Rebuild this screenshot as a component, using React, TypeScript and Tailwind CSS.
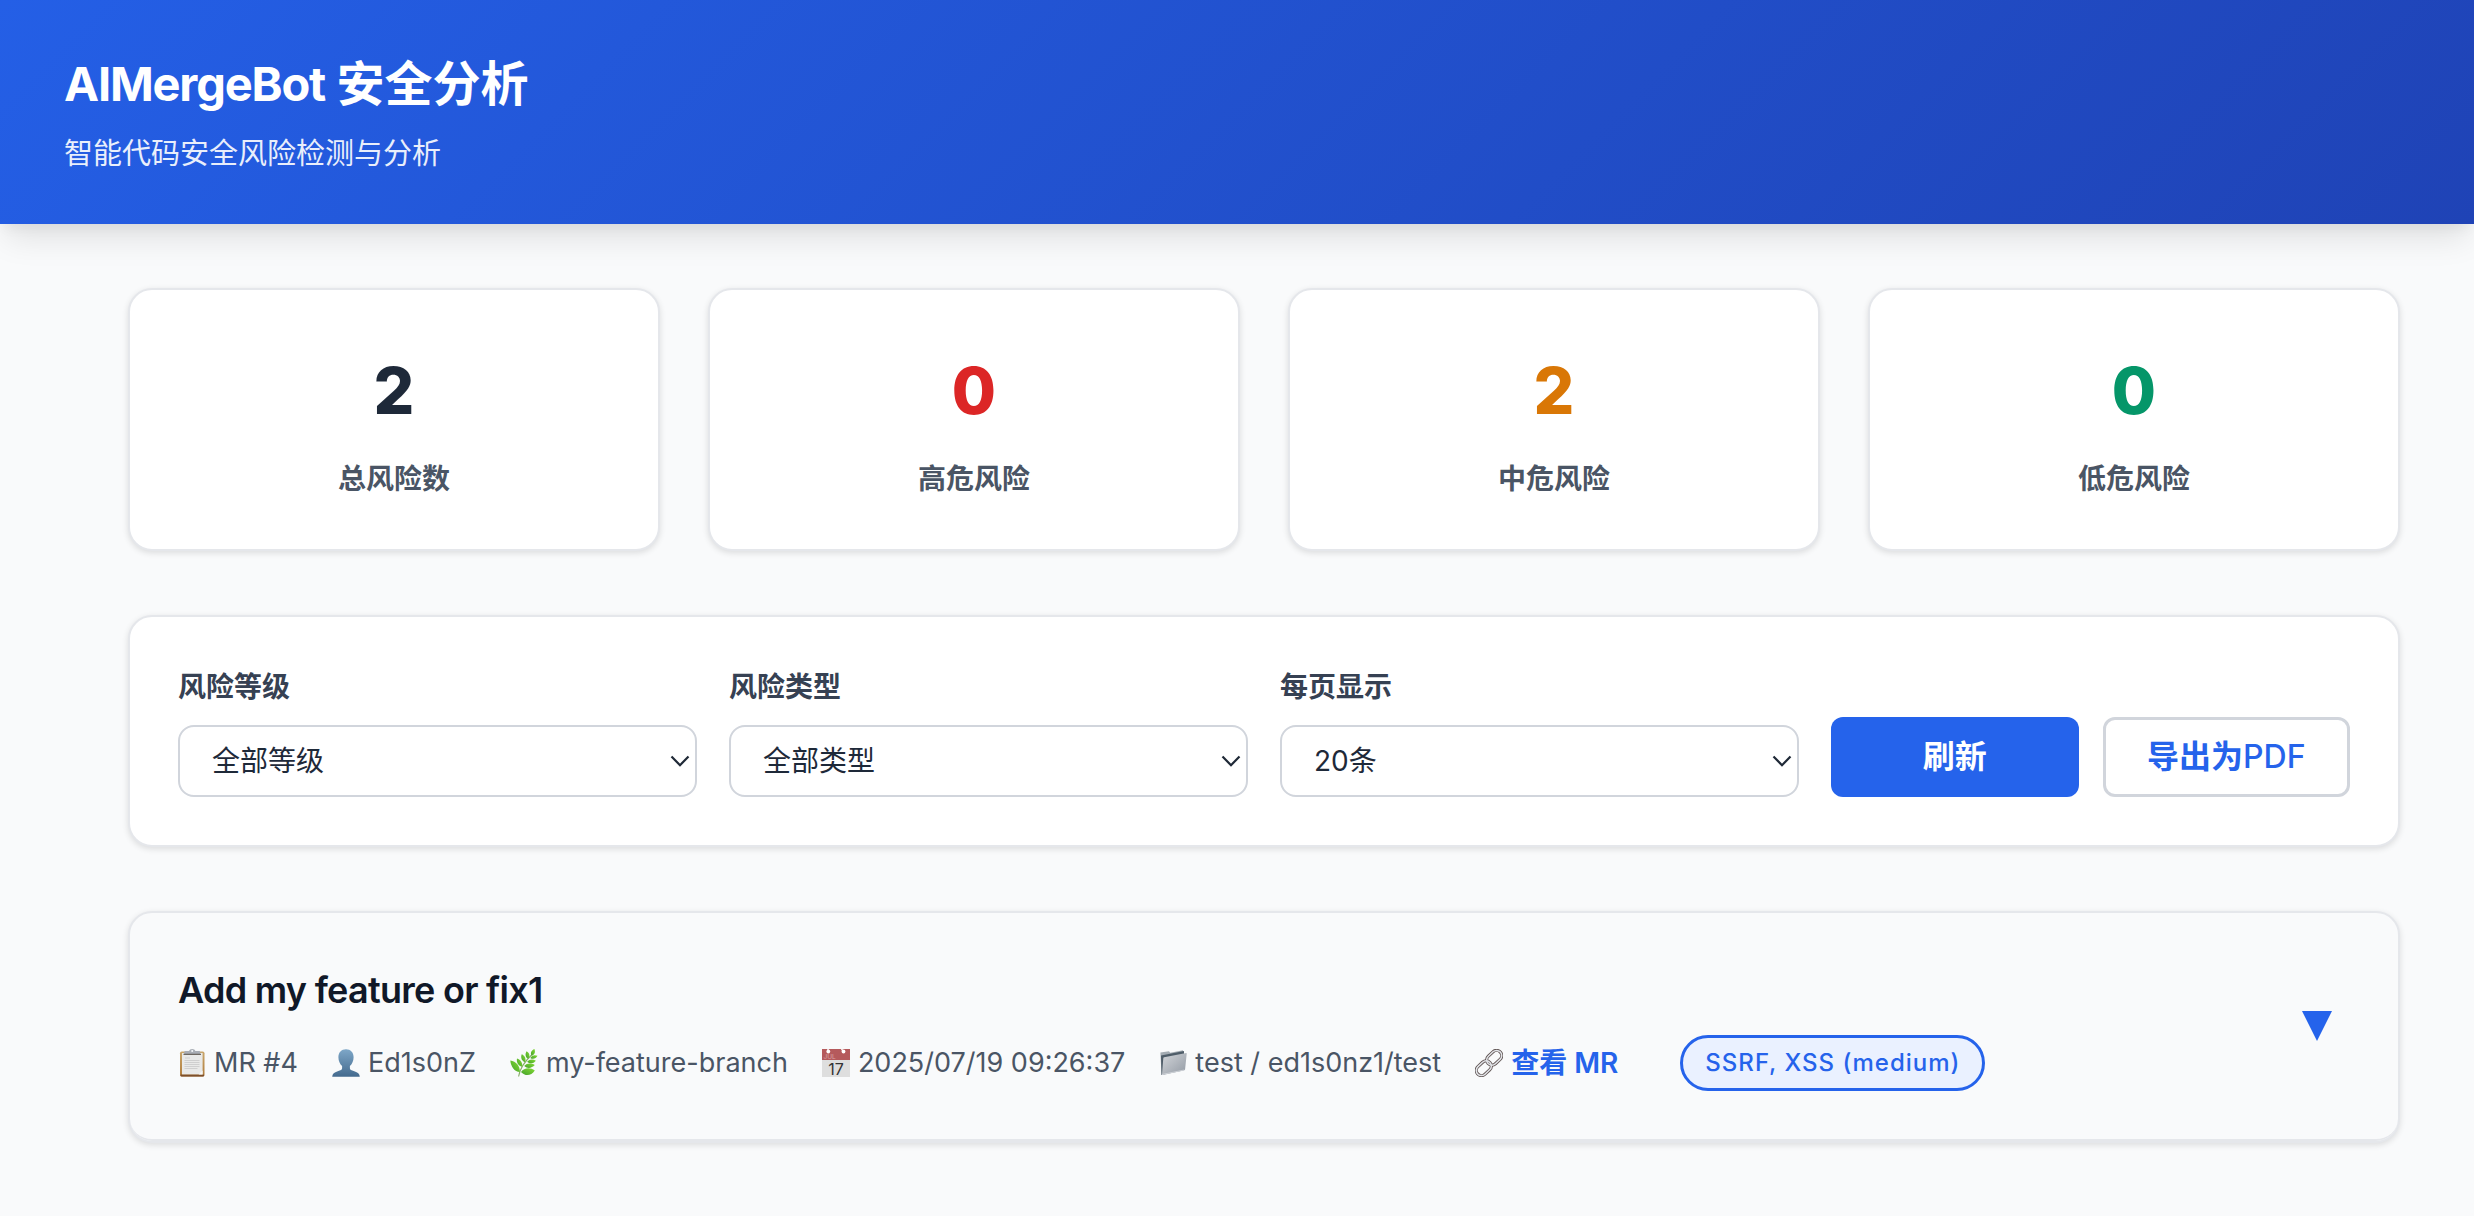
import type { ReactNode } from 'react';

const stats = [
  { value: 2, label: '总风险数', color: 'text-gray-800' },
  { value: 0, label: '高危风险', color: 'text-[#dc2626]' },
  { value: 2, label: '中危风险', color: 'text-[#d97706]' },
  { value: 0, label: '低危风险', color: 'text-[#059669]' },
];

const filters = [
  { id: 'level', label: '风险等级', options: ['全部等级', '高危', '中危', '低危'] },
  { id: 'type', label: '风险类型', options: ['全部类型', 'SSRF', 'XSS'] },
  { id: 'size', label: '每页显示', options: ['20条', '50条', '100条'] },
];

function ClipboardIcon() {
  return (
    <svg viewBox="0 0 28 28" className="size-7 shrink-0" aria-hidden="true">
      <defs>
        <linearGradient id="board" x1="0" y1="0" x2="0" y2="1">
          <stop offset="0" stopColor="#c9a66b" />
          <stop offset="1" stopColor="#b07c3c" />
        </linearGradient>
      </defs>
      <rect x="2" y="2.5" width="24.5" height="25" rx="1.8" fill="url(#board)" />
      <rect x="2.4" y="25.6" width="23.8" height="2" rx="1" fill="#7d4f2c" />
      <rect x="4" y="4" width="20.6" height="21.4" fill="#e9e9e8" />
      <path d="M4 25.4h20.6v-4l-4 4z" fill="#f7f7f6" />
      <path d="M7 9h5M6.5 11.5h15M6.5 13.5h15M6.5 15.5h15M6.5 17.5h15M6.5 19.5h13" stroke="#cfcfcf" strokeWidth="1.1" />
      <path d="M6.2 3.2q0-1.2 1.2-1.2h3.6q.6-2 3.2-2t3.2 2H21q1.2 0 1.2 1.2v2.5h-16z" fill="#a9adb5" />
      <path d="M5.5 5.4h17.5" stroke="#6e6862" strokeWidth="1.3" />
      <circle cx="14.2" cy="2" r="1" fill="#f3f6fa" />
    </svg>
  );
}

function PersonIcon() {
  return (
    <svg viewBox="0 0 28 28" className="size-7 shrink-0" aria-hidden="true">
      <defs>
        <linearGradient id="person" x1="0" y1="0" x2="0" y2="1">
          <stop offset="0" stopColor="#7ea7c8" />
          <stop offset="1" stopColor="#446a8e" />
        </linearGradient>
      </defs>
      <path
        d="M14 .2c4.600 0 7.600 3.100 7.600 8.100 0 3.700-1.600 7-3.700 8.700v2.300c0 1.500 1.400 2 4.400 2.900 3.500 1.100 5.300 2.500 5.500 5.600H.2c.2-3.100 2-4.500 5.500-5.600 3-.9 4.400-1.400 4.400-2.900V17C8 15.300 6.400 12 6.400 8.300 6.400 3.300 9.400.2 14 .2z"
        fill="url(#person)"
      />
    </svg>
  );
}

function HerbIcon() {
  return (
    <svg viewBox="0 0 28 28" className="size-7 shrink-0" aria-hidden="true">
      <defs>
        <linearGradient id="herb" x1="1" y1="0" x2="0" y2="1">
          <stop offset="0" stopColor="#84dc34" />
          <stop offset="1" stopColor="#45a02c" />
        </linearGradient>
      </defs>
      <path d="M8.600 27.500C9.500 21 14 13 22.500 5" fill="none" stroke="#86ad66" strokeWidth="1.100" />
      <g fill="url(#herb)">
        <path d="M21.800 6.800C19.800 4.200 21.500 1.300 24.400.1c1.200 2.600.6 5.600-2.600 6.700z" />
        <path d="M18.300 9.800c-3.200-1.500-3.300-5-1.700-7.600 2.900 1.500 3.700 4.900 1.700 7.600z" />
        <path d="M15 13.300c-3.500-1.300-4.500-5-3.300-8 3.300 1.400 4.700 4.900 3.300 8z" />
        <path d="M12 17.800c-4.200-.9-5.700-4.800-5-8.200 3.800 1.200 5.900 4.700 5 8.200z" />
        <path d="M9.800 23C4.500 22.800.8 17.500.3 11.400c5.800.7 9.900 5.600 9.500 11.600z" />
        <path d="M20.300 9c1.800-3 4.600-3.200 7.200-2.200-1.500 2.900-4.500 4-7.200 2.200z" />
        <path d="M17.200 12.700c2.300-2.700 5.800-2.700 8.700-1-2.300 2.800-5.800 3.500-8.700 1z" />
        <path d="M14.200 17.100c2.600-3 7-3.200 10.600-1-3 3.200-7.200 3.900-10.600 1z" />
        <path d="M11 22.900c3.200-4.500 9.300-4.800 13.800-1.500-3.500 5.500-9.600 6.100-13.800 1.500z" />
      </g>
    </svg>
  );
}

function CalendarIcon() {
  return (
    <svg viewBox="0 0 28 28" className="size-7 shrink-0" aria-hidden="true">
      <rect width="28" height="28" fill="#dedede" />
      <rect width="28" height="11" fill="#b55a5c" />
      <circle cx="6.300" cy="2.500" r="1.900" fill="#fff" />
      <circle cx="21.500" cy="2.500" r="1.900" fill="#fff" />
      <path d="M6 0v2.500M19.500 0l2 2.500" stroke="#fff" strokeWidth="1.300" />
      <text x="1.500" y="10" fontSize="6.500" fill="#dba6a7" className="font-['Inter']">JUL</text>
      <text x="14" y="25.500" fontSize="16" textAnchor="middle" fill="#333" className="font-['Inter']">17</text>
    </svg>
  );
}

function FolderIcon() {
  return (
    <svg viewBox="0 0 28 28" className="size-7 shrink-0" aria-hidden="true">
      <defs>
        <linearGradient id="folder" x1="0" y1="0" x2="1" y2="1">
          <stop offset="0" stopColor="#d3d6da" />
          <stop offset="1" stopColor="#9299a3" />
        </linearGradient>
      </defs>
      <path d="M1.400 3.500 10 2.200l1.200 1.500L24 1.300l.5 20.200L2.500 26z" fill="#a3abb2" />
      <path d="M2 6.500 25 2v18L2.500 26z" fill="#4f5d69" />
      <path d="M5.200 8.200 27.200 4q.6 0 .5.700l-1.600 15.600q-.1.800-.9 1L3.800 26q-.8.100-.8-.7l1.300-16q.1-.9.900-1.100z" fill="url(#folder)" />
      <path d="M3 25.500 25.300 21" stroke="#d8dbdf" strokeWidth=".8" />
    </svg>
  );
}

function LinkIcon() {
  return (
    <svg viewBox="0 0 28 28" className="size-7 shrink-0" aria-hidden="true" fill="none">
      <g stroke="#5f5352" strokeWidth="3.200">
        <rect x="-8.400" y="-5.200" width="16.800" height="10.400" rx="5.200" transform="translate(8.800 19.200) rotate(-43)" />
        <rect x="-8.400" y="-5.200" width="16.800" height="10.400" rx="5.200" transform="translate(19.200 8.800) rotate(-43)" />
      </g>
      <g stroke="#e2e4e8" strokeWidth="1.500">
        <rect x="-8.400" y="-5.200" width="16.800" height="10.400" rx="5.200" transform="translate(8.800 19.200) rotate(-43)" />
        <rect x="-8.400" y="-5.200" width="16.800" height="10.400" rx="5.200" transform="translate(19.200 8.800) rotate(-43)" />
      </g>
    </svg>
  );
}

function Meta({ icon, children }: { icon: ReactNode; children: ReactNode }) {
  return (
    <span className="flex items-center gap-2">
      {icon}
      <span>{children}</span>
    </span>
  );
}

export default function App() {
  return (
    <div className="min-h-screen bg-[#f9fafb] font-['Inter','Noto_Sans_CJK_SC',sans-serif] text-gray-800">
      <header className="bg-linear-135 from-[#245fe6] to-[#1f43b6] px-16 py-12 text-white shadow-[0_20px_30px_-6px_rgba(0,0,0,0.10),0_8px_12px_-4px_rgba(0,0,0,0.05)]">
        <h1 className="text-5xl leading-[72px] font-bold">
          <span className="text-[47px] tracking-tight">AIMergeBot</span> 安全分析
        </h1>
        <p className="mt-3 text-[29px] leading-11 opacity-90">智能代码安全风险检测与分析</p>
      </header>

      <main className="flex flex-col gap-16 pt-16 pr-[74px] pb-16 pl-32">
        <section className="grid grid-cols-4 gap-12">
          {stats.map((s) => (
            <div
              key={s.label}
              className="flex flex-col items-center gap-3.5 rounded-3xl border-2 border-gray-200 bg-white p-12 shadow-[0_2px_6px_rgba(0,0,0,0.12)]"
            >
              <div className={`text-[64px] leading-[106px] font-extrabold ${s.color}`}>{s.value}</div>
              <div className="text-[28px] leading-[43px] font-semibold text-gray-600">{s.label}</div>
            </div>
          ))}
        </section>

        <section className="grid grid-cols-4 items-end gap-8 rounded-3xl border-2 border-gray-200 bg-white p-12 shadow-[0_2px_6px_rgba(0,0,0,0.12)]">
          {filters.map((f) => (
            <div key={f.id} className="flex flex-col gap-4">
              <label htmlFor={f.id} className="text-[28px] leading-11 font-semibold text-gray-700">
                {f.label}
              </label>
              <div className="relative">
                <select
                  id={f.id}
                  className="h-[72px] w-full appearance-none rounded-2xl border-2 border-gray-300 bg-white px-8 text-[28px] text-gray-800"
                >
                  {f.options.map((o) => (
                    <option key={o}>{o}</option>
                  ))}
                </select>
                <svg
                  viewBox="0 0 20 12"
                  className="pointer-events-none absolute top-[30px] right-[7px] h-3 w-5"
                  fill="none"
                  stroke="#1f2937"
                  strokeWidth="2.2"
                  aria-hidden="true"
                >
                  <path d="M1.500 1.500 10 10.200l8.500-8.700" />
                </svg>
              </div>
            </div>
          ))}
          <div className="grid grid-cols-2 gap-6">
            <button type="button" className="h-20 rounded-xl bg-[#2563eb] text-[32px] font-bold text-white">
              刷新
            </button>
            <button
              type="button"
              className="h-20 rounded-xl border-3 border-gray-300 bg-white text-[32px] font-semibold text-[#2563eb]"
            >
              导出为<span className="font-medium">PDF</span>
            </button>
          </div>
        </section>

        <section className="rounded-3xl border-2 border-gray-200 bg-[#f9fafb] shadow-[0_2px_6px_rgba(0,0,0,0.12)]">
          <div className="flex items-center justify-between overflow-hidden rounded-[22px] border-b-2 border-gray-200 p-12">
            <div>
              <h2 className="text-4xl leading-[58px] font-semibold tracking-[-0.02em] text-gray-900">
                Add my feature or fix1
              </h2>
              <div className="mt-4 flex flex-wrap items-center gap-[34px] text-[27px] leading-11 text-gray-600">
                <Meta icon={<ClipboardIcon />}>MR #4</Meta>
                <Meta icon={<PersonIcon />}>Ed1s0nZ</Meta>
                <Meta icon={<HerbIcon />}>my-feature-branch</Meta>
                <Meta icon={<CalendarIcon />}>2025/07/19 09:26:37</Meta>
                <Meta icon={<FolderIcon />}>test / ed1s0nz1/test</Meta>
                <Meta icon={<LinkIcon />}>
                  <a href="#mr-4" className="text-[28px] font-semibold text-[#2563eb]">
                    查看 MR
                  </a>
                </Meta>
                <span className="ml-7 rounded-full border-3 border-[#2563eb] bg-[#eaf1ff] px-[22px] text-2xl leading-[50px] font-medium tracking-[1px] text-[#2563eb]">
                  SSRF, XSS (medium)
                </span>
              </div>
            </div>
            <button type="button" aria-label="展开" className="mr-3.5 p-1">
              <svg viewBox="0 0 30 30" className="size-[30px]" fill="#2563eb" aria-hidden="true">
                <path d="M0 0h30L15 30z" />
              </svg>
            </button>
          </div>
        </section>
      </main>
    </div>
  );
}
